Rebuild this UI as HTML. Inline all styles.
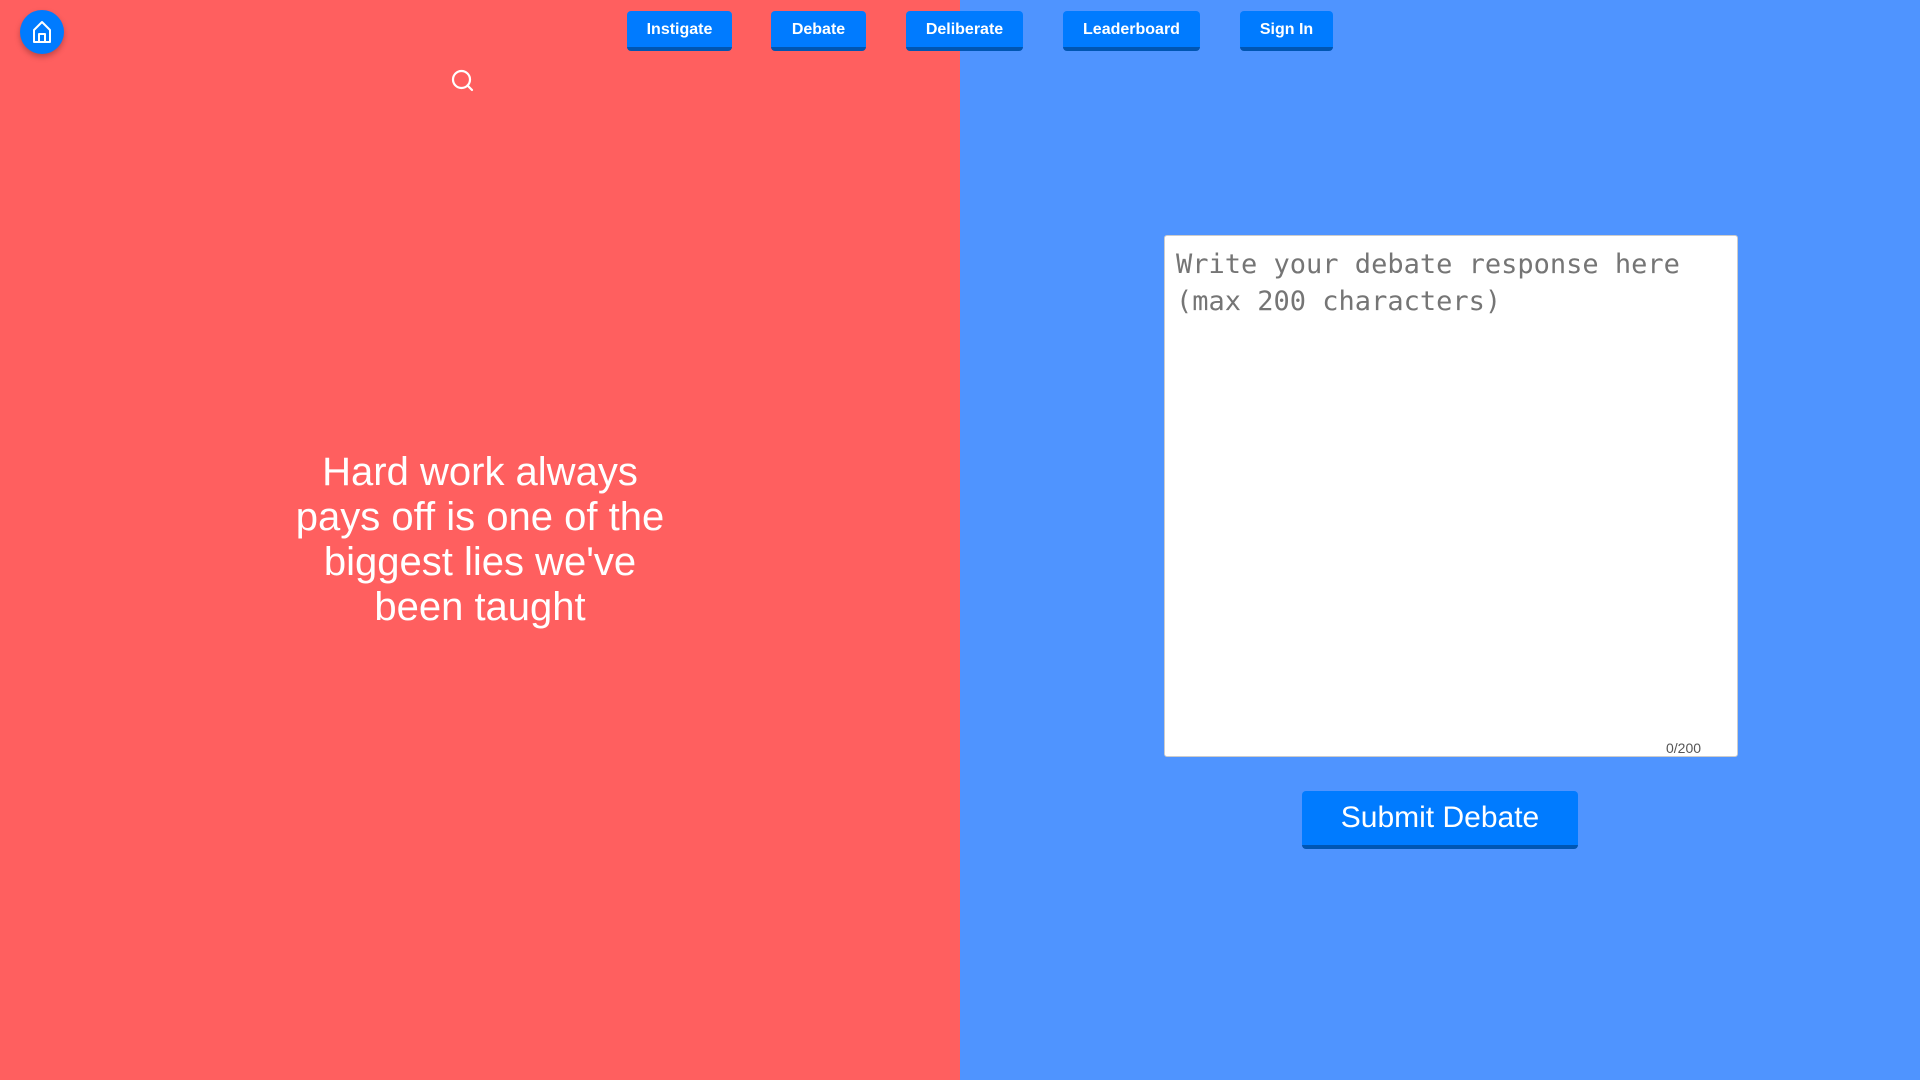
<!DOCTYPE html>
<html><head><style>
*{margin:0;padding:0;box-sizing:border-box}
body{width:1920px;height:1080px;overflow:hidden;font-family:"Liberation Sans",Arial,sans-serif;position:relative}
.l{position:absolute;left:0;top:0;width:960px;height:1080px;background:#ff5f5f}
.r{position:absolute;left:960px;top:0;width:960px;height:1080px;background:#4f94ff}
.home{position:absolute;left:20px;top:10px;width:44px;height:44px;border-radius:50%;background:#007bff;box-shadow:0 3px 6px rgba(0,0,0,.25)}
.nb{position:absolute;top:11px;height:40px;background:#007bff;border-bottom:4px solid #0056b3;border-radius:4px;color:#fff;font-weight:bold;font-size:16px;text-align:center;line-height:37px}
.q{position:absolute;left:280px;width:400px;top:450px;color:#fff;font-size:40px;line-height:45px;text-align:center}
.ta{position:absolute;left:1164px;top:235px;width:574px;height:522px;background:#fff;border:1px solid #ccc;border-radius:3px}
.ph{position:absolute;left:11px;top:10px;font-family:"DejaVu Sans Mono","Liberation Mono",monospace;font-size:27px;line-height:37px;color:#757575}
.cnt{position:absolute;left:1666px;top:740px;font-size:14px;color:#555}
.sub{position:absolute;left:1302px;top:791px;width:276px;height:58px;background:#007bff;border-bottom:4px solid #0056b3;border-radius:4px;color:#fff;font-size:30px;text-align:center;line-height:54px}
</style></head><body>
<div class="l"></div><div class="r"></div>
<div class="home"><svg width="44" height="44" viewBox="0 0 44 44"><path d="M14 20 L22 12 L30 20 V32 H14 Z M19 32 V24 H25 V32" fill="none" stroke="#fff" stroke-width="2" stroke-linejoin="round"/></svg></div>
<div class="nb" style="left:627px;width:105px">Instigate</div>
<div class="nb" style="left:771px;width:95px">Debate</div>
<div class="nb" style="left:906px;width:117px">Deliberate</div>
<div class="nb" style="left:1063px;width:137px">Leaderboard</div>
<div class="nb" style="left:1240px;width:93px">Sign In</div>
<svg style="position:absolute;left:449px;top:67px" width="28" height="28" viewBox="0 0 28 28"><circle cx="12.5" cy="12.5" r="8.5" fill="none" stroke="#fff" stroke-width="2.2"/><path d="M18.5 18.5 L23 23" stroke="#fff" stroke-width="2.2" stroke-linecap="round"/></svg>
<div class="q">Hard work always pays off is one of the biggest lies we've been taught</div>
<div class="ta"><div class="ph">Write your debate response here<br>(max 200 characters)</div></div>
<div class="cnt">0/200</div>
<div class="sub">Submit Debate</div>
</body></html>
